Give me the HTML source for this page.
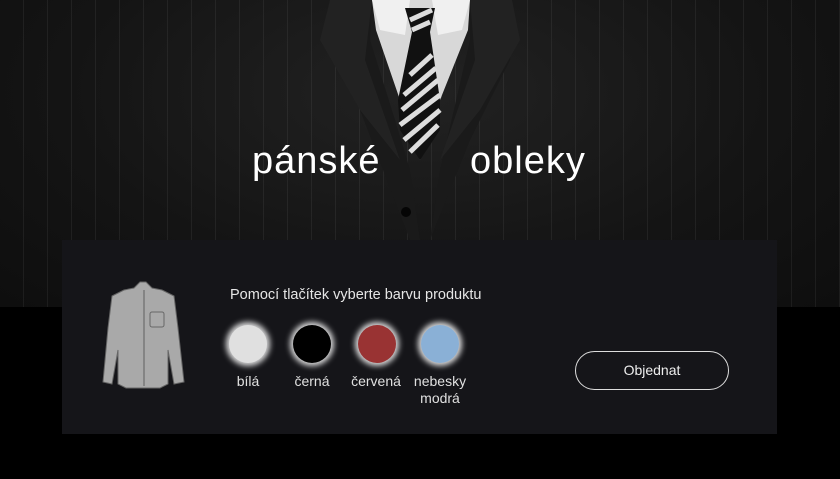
<!DOCTYPE html>
<html><head><meta charset="utf-8"><style>
*{margin:0;padding:0;box-sizing:border-box}
body{width:840px;height:479px;overflow:hidden;background:#000;font-family:"Liberation Sans",sans-serif;position:relative}
.top{position:absolute;left:0;top:0;width:840px;height:307px;background:
repeating-linear-gradient(90deg,rgba(255,255,255,0) 0 23px,rgba(255,255,255,0.06) 23px 24px),
radial-gradient(ellipse at 50% 30%,#222 0%,#141414 60%,#0e0e0e 100%)}
.panel{position:absolute;left:62px;top:240px;width:715px;height:194px;background:#151519}
.title{position:absolute;top:140px;color:#fff;font-size:38px;letter-spacing:1px}
.hint{position:absolute;left:230px;top:287px;color:#e6e6e6;font-size:14.5px}
.sw{position:absolute;top:325px;width:38px;height:38px;border-radius:50%;box-shadow:0 0 6px 3px rgba(255,255,255,0.85)}
.lbl{position:absolute;top:373px;color:#e0e0e0;font-size:14px;text-align:center;width:70px;line-height:17px}
.btn{position:absolute;left:575px;top:351px;width:154px;height:39px;border:1.5px solid #ddd;border-radius:20px;color:#eee;font-size:14px;text-align:center;line-height:36px}
</style></head><body>
<div class="top"></div>
<svg style="position:absolute;left:0;top:0" width="840" height="240">
<path d="M330 0 L372 0 L370 40 L395 120 L410 170 L420 240 L430 240 L440 170 L470 40 L470 0 L512 0 L510 60 L470 140 L430 240 L410 240 L360 110 Z" fill="#1a1a1a"/>
<path d="M372 0 L470 0 L468 30 L440 100 L420 160 L400 100 L376 30 Z" fill="#d8d8d8"/>
<path d="M372 0 L380 30 L405 35 L410 0 Z M470 0 L462 30 L438 35 L432 0 Z" fill="#f0f0f0"/>
<path d="M405 8 L435 8 L430 32 L440 100 L440 130 L420 160 L400 130 L398 100 L412 32 Z" fill="#111"/>
<path d="M402 110 L438 80 M400 125 L440 95 M404 140 L440 110 M410 152 L438 125 M404 95 L436 68 M410 75 L432 55 M410 20 L432 10 M412 30 L430 22" stroke="#ddd" stroke-width="5"/>
<path d="M330 0 L320 40 L360 110 L400 160 L365 60 L372 0 Z M512 0 L520 40 L480 110 L440 160 L475 60 L470 0 Z" fill="#222"/>
<circle cx="406" cy="212" r="5" fill="#050505"/>
</svg>
<div class="title" style="left:252px">pánské</div>
<div class="title" style="left:470px">obleky</div>
<div class="panel"></div>
<svg style="position:absolute;left:100px;top:278px" width="86" height="112" viewBox="0 0 86 112">
<path d="M40 4 L46 4 L52 10 L62 12 L74 18 L78 50 L84 104 L74 106 L68 72 L68 106 L60 110 L26 110 L18 106 L18 72 L12 106 L3 104 L8 50 L12 18 L24 12 L34 10 Z" fill="#a9a9a9" stroke="#666" stroke-width="1"/>
<path d="M44 12 L44 108" stroke="#777" stroke-width="1.5"/>
<rect x="50" y="34" width="14" height="15" rx="2" fill="none" stroke="#666"/>
</svg>
<div class="hint">Pomocí tlačítek vyberte barvu produktu</div>
<div class="sw" style="left:229px;background:#e0e0e0"></div>
<div class="sw" style="left:293px;background:#000"></div>
<div class="sw" style="left:358px;background:#993333"></div>
<div class="sw" style="left:421px;background:#8ab0d6"></div>
<div class="lbl" style="left:213px">bílá</div>
<div class="lbl" style="left:277px">černá</div>
<div class="lbl" style="left:341px">červená</div>
<div class="lbl" style="left:405px">nebesky<br>modrá</div>
<div class="btn">Objednat</div>
</body></html>
